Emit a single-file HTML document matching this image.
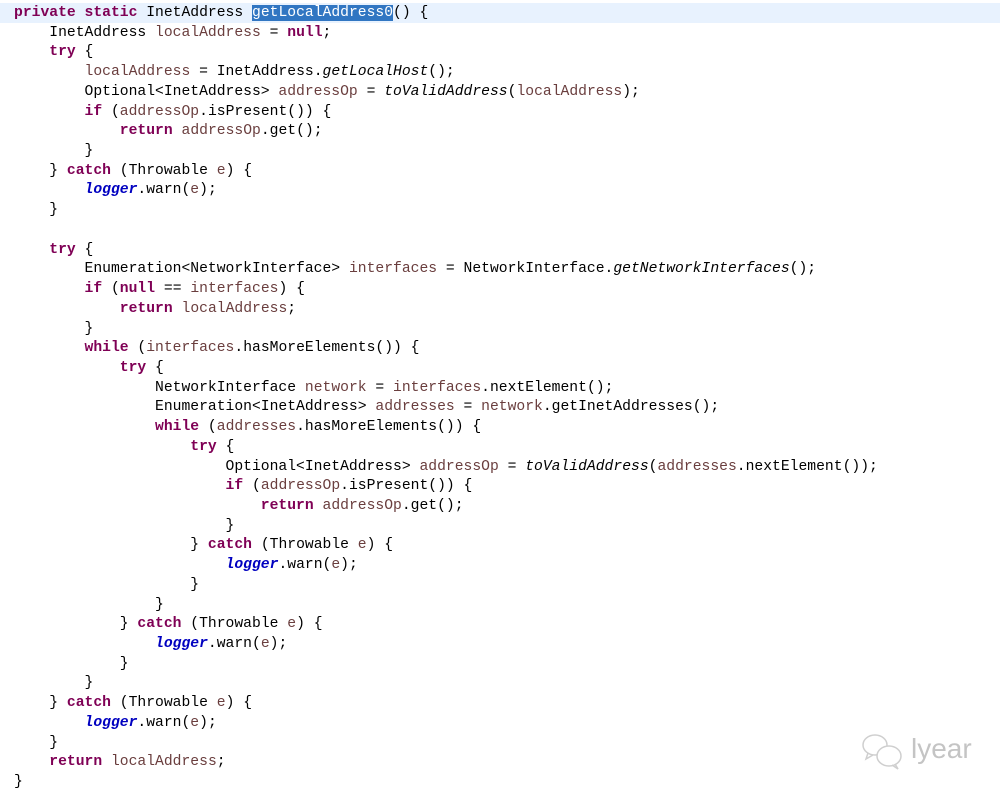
<!DOCTYPE html>
<html><head><meta charset="utf-8"><style>
body{margin:0;background:#fff;width:1000px;height:797px;overflow:hidden;position:relative}
pre{margin:0;position:absolute;left:14px;top:4px;font-family:"Liberation Mono",monospace;font-size:14.7px;line-height:19.72px;color:#000}
.hl{position:absolute;left:0;top:3px;width:1000px;height:20px;background:#e8f2fe}
.k{color:#7f0055;font-weight:bold}
.v{color:#6a3e3e}
.i{font-style:italic}
.f{color:#0000c0;font-weight:bold;font-style:italic}
.sel{background:#3176c2;color:#fff}
.wm{position:absolute;left:911px;top:733px;color:#c4c4c4;font-family:"Liberation Sans",sans-serif;font-size:28px}
</style></head><body>
<div class="hl"></div>
<pre><span class="k">private</span> <span class="k">static</span> InetAddress <span class="sel">getLocalAddress0</span>() {
    InetAddress <span class="v">localAddress</span> = <span class="k">null</span>;
    <span class="k">try</span> {
        <span class="v">localAddress</span> = InetAddress.<span class="i">getLocalHost</span>();
        Optional&lt;InetAddress&gt; <span class="v">addressOp</span> = <span class="i">toValidAddress</span>(<span class="v">localAddress</span>);
        <span class="k">if</span> (<span class="v">addressOp</span>.isPresent()) {
            <span class="k">return</span> <span class="v">addressOp</span>.get();
        }
    } <span class="k">catch</span> (Throwable <span class="v">e</span>) {
        <span class="f">logger</span>.warn(<span class="v">e</span>);
    }

    <span class="k">try</span> {
        Enumeration&lt;NetworkInterface&gt; <span class="v">interfaces</span> = NetworkInterface.<span class="i">getNetworkInterfaces</span>();
        <span class="k">if</span> (<span class="k">null</span> == <span class="v">interfaces</span>) {
            <span class="k">return</span> <span class="v">localAddress</span>;
        }
        <span class="k">while</span> (<span class="v">interfaces</span>.hasMoreElements()) {
            <span class="k">try</span> {
                NetworkInterface <span class="v">network</span> = <span class="v">interfaces</span>.nextElement();
                Enumeration&lt;InetAddress&gt; <span class="v">addresses</span> = <span class="v">network</span>.getInetAddresses();
                <span class="k">while</span> (<span class="v">addresses</span>.hasMoreElements()) {
                    <span class="k">try</span> {
                        Optional&lt;InetAddress&gt; <span class="v">addressOp</span> = <span class="i">toValidAddress</span>(<span class="v">addresses</span>.nextElement());
                        <span class="k">if</span> (<span class="v">addressOp</span>.isPresent()) {
                            <span class="k">return</span> <span class="v">addressOp</span>.get();
                        }
                    } <span class="k">catch</span> (Throwable <span class="v">e</span>) {
                        <span class="f">logger</span>.warn(<span class="v">e</span>);
                    }
                }
            } <span class="k">catch</span> (Throwable <span class="v">e</span>) {
                <span class="f">logger</span>.warn(<span class="v">e</span>);
            }
        }
    } <span class="k">catch</span> (Throwable <span class="v">e</span>) {
        <span class="f">logger</span>.warn(<span class="v">e</span>);
    }
    <span class="k">return</span> <span class="v">localAddress</span>;
}</pre>
<svg style="position:absolute;left:860px;top:732px" width="50" height="40" viewBox="0 0 50 40"><g fill="none" stroke="#cfcfcf" stroke-width="1.5"><ellipse cx="15" cy="13" rx="12" ry="10"/><path d="M8 21 L6 27 L13 23"/><ellipse cx="29" cy="24" rx="12" ry="10" fill="#fff"/><path d="M35 32 L38 37 L32 33"/></g></svg>
<div class="wm">lyear</div>
</body></html>
